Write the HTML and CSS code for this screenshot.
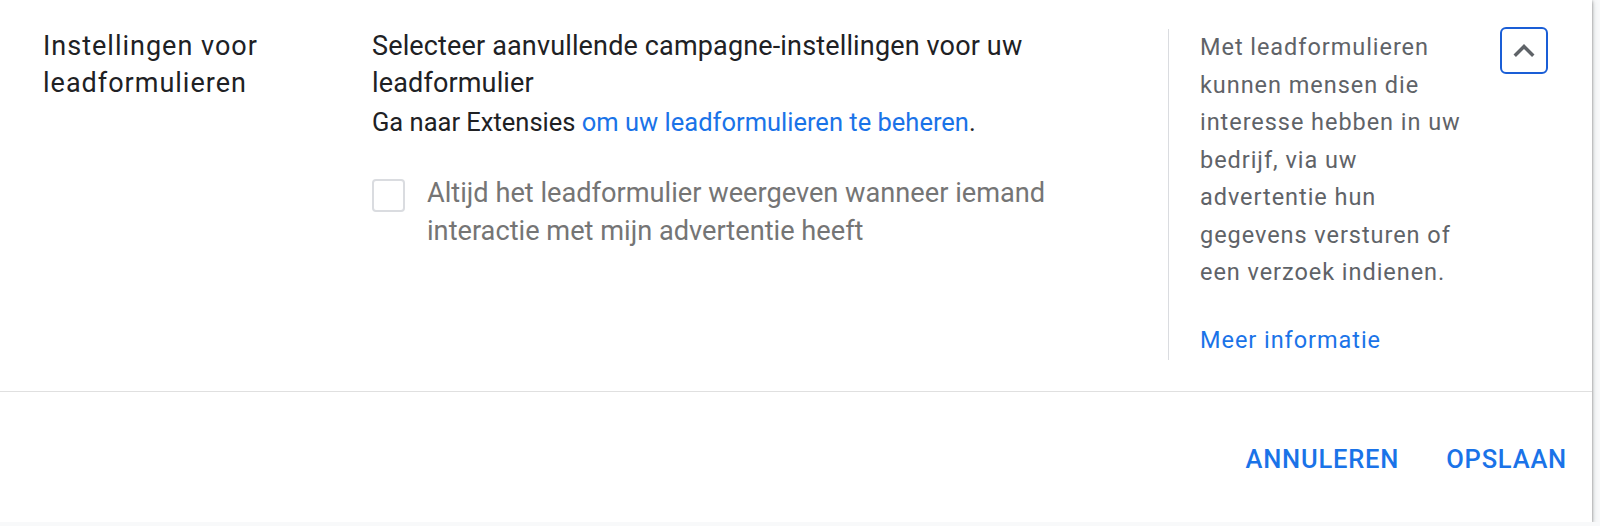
FILE: index.html
```html
<!DOCTYPE html>
<html lang="nl">
<head>
    <meta charset="utf-8">
    <title>Instellingen voor leadformulieren</title>
    <link rel="stylesheet" href="styles.css">
</head>
<body>
<div class="kaart">
    <div class="inhoud">
        <div class="titel">Instellingen voor leadformulieren</div>

        <div class="midden">
            <div class="uitleg">Selecteer aanvullende campagne-instellingen voor uw leadformulier</div>
            <div class="extensies">Ga naar Extensies <a href="#">om uw leadformulieren te beheren</a>.</div>

            <label class="vinkje">
                <span class="vakje"></span>
                <span class="vinkje-tekst">Altijd het leadformulier weergeven wanneer iemand interactie met mijn advertentie heeft</span>
            </label>
        </div>

        <div class="hulp">
            <p>Met leadformulieren kunnen mensen die interesse hebben in uw bedrijf, via uw advertentie hun gegevens versturen of een verzoek indienen.</p>
            <a href="#">Meer informatie</a>
        </div>

        <button class="inklappen" aria-label="Inklappen">
            <svg viewBox="0 0 24 24">
                <path d="M7.41 15.41L12 10.83l4.59 4.58L18 14l-6-6-6 6z" fill="#5f6368"/>
            </svg>
        </button>
    </div>

    <div class="knoppen">
        <button class="knop">ANNULEREN</button>
        <button class="knop">OPSLAAN</button>
    </div>
</div>
</body>
</html>
```

FILE: styles.css
```css
html {
    background-color: #f8f9fa;
}

body {
    margin: 0;
    font-family: Roboto, "Noto Sans", Arial, sans-serif;
    color: #202124;
}

a {
    color: #1a73e8;
    text-decoration: none;
}

.kaart {
    width: 1592px;
    height: 522px;
    background-color: #fff;
    box-shadow: 0 1px 3px rgba(0, 0, 0, 0.45), 0 2px 6px 1px rgba(60, 64, 67, 0.15);
    display: flex;
    flex-direction: column;
}

.inhoud {
    height: 392px;
    box-sizing: border-box;
    border-bottom: 1px solid #e0e0e0;
    display: flex;
    align-items: flex-start;
    padding-top: 28px;
}

.titel {
    width: 290px;
    margin-left: 43px;
    margin-right: 39px;
    font-size: 27px;
    line-height: 37px;
    letter-spacing: 1px;
}

.midden {
    width: 708px;
    margin-right: 88px;
}

.uitleg {
    font-size: 27px;
    line-height: 37px;
    letter-spacing: 0.15px;
}

.extensies {
    font-size: 25.5px;
    line-height: 30px;
    margin-top: 5px;
}

.vinkje {
    display: flex;
    align-items: flex-start;
    margin-top: 37px;
}

.vakje {
    flex: none;
    width: 29px;
    height: 29px;
    border: 2px solid #dadce0;
    border-radius: 4px;
    margin-top: 5px;
    margin-right: 22px;
}

.vinkje-tekst {
    font-size: 27.2px;
    line-height: 38px;
    color: #757575;
}

.hulp {
    width: 304px;
    border-left: 1px solid #dadce0;
    padding-left: 31px;
    margin-top: 1px;
    height: 331px;
    box-sizing: border-box;
}

.hulp p {
    margin: 0 0 30px;
    font-size: 23.5px;
    line-height: 37.5px;
    letter-spacing: 0.95px;
    color: #5f6368;
}

.hulp a {
    font-size: 23.5px;
    line-height: 37px;
    letter-spacing: 0.95px;
}

.inklappen {
    width: 48px;
    height: 47px;
    margin-left: 28px;
    margin-top: -1px;
    padding: 0;
    background: #fff;
    border: 2px solid #1a5ed6;
    border-radius: 6px;
    display: flex;
    align-items: center;
    justify-content: center;
}

.inklappen svg {
    width: 42px;
    height: 42px;
}

.knoppen {
    flex: 1;
    display: flex;
    justify-content: flex-end;
    align-items: center;
    gap: 23px;
    padding-right: 13px;
    padding-top: 3px;
}

.knop {
    background: none;
    border: none;
    padding: 8px 12px;
    font-family: Roboto, Arial, sans-serif;
    font-size: 25.5px;
    font-weight: 500;
    letter-spacing: 0.8px;
    color: #1a73e8;
}
```
